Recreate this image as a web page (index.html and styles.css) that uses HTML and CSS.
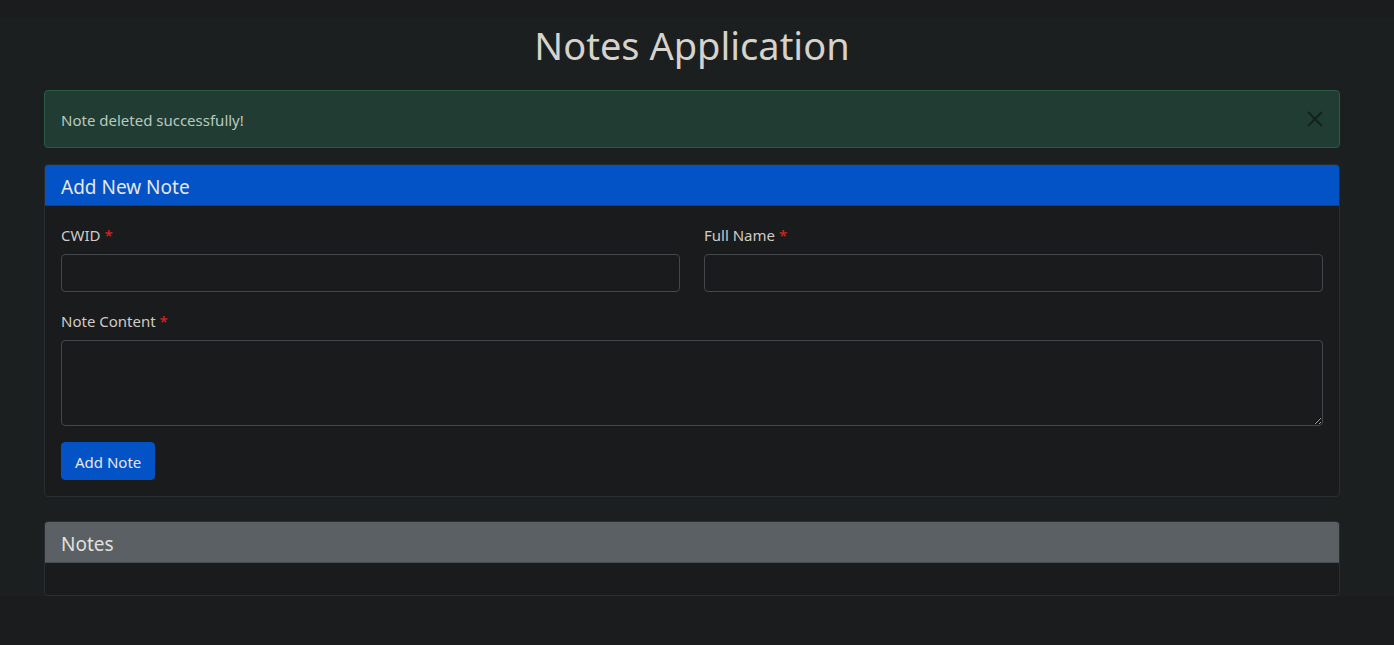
FILE: index.html
```html
<!DOCTYPE html>
<html lang="en">
<head>
<meta charset="utf-8">
<title>Notes Application</title>
<link rel="stylesheet" href="styles.css">
</head>
<body>
<div class="container">
  <h1 class="title">Notes Application</h1>
  <div class="alert">
    <span class="alert-text">Note deleted successfully!</span>
    <button class="close" aria-label="Close">
      <svg width="18" height="18" viewBox="0 0 18 18"><path d="M2 2 L16 16 M16 2 L2 16" stroke="currentColor" stroke-width="2" fill="none"/></svg>
    </button>
  </div>
  <div class="card">
    <div class="card-header primary">Add New Note</div>
    <div class="card-body">
      <div class="row">
        <div class="field">
          <label>CWID <span class="req">*</span></label>
          <input type="text" class="input">
        </div>
        <div class="field">
          <label>Full Name <span class="req">*</span></label>
          <input type="text" class="input">
        </div>
      </div>
      <div class="field">
        <label>Note Content <span class="req">*</span></label>
        <textarea class="input textarea" rows="3"></textarea>
      </div>
      <button class="btn">Add Note</button>
    </div>
  </div>
  <div class="card notes">
    <div class="card-header secondary">Notes</div>
    <div class="card-body empty"></div>
  </div>
</div>
</body>
</html>
```
FILE: styles.css
```css
html {
  background: #1b1c1e;
}
body {
  margin: 17px 0 0;
  padding: 4px 10px 0 0;
  background: #1c1f20;
  font-family: "Noto Sans", "Open Sans", sans-serif;
  font-size: 16px;
  line-height: 24px;
  color: #d3cfc9;
}
.container {
  width: 1296px;
  margin: 0 auto;
}
.title {
  margin: 0 0 21px;
  font-size: 38px;
  line-height: 48px;
  font-weight: 400;
  text-align: center;
  color: #d6d2cc;
}
.alert {
  display: flex;
  align-items: center;
  justify-content: space-between;
  height: 56px;
  padding: 0 15px 0 16px;
  background: #213d33;
  border: 1px solid #2c5a44;
  border-radius: 4px;
  color: #b9c9bf;
  margin-bottom: 16px;
}
.alert-text {
  font-size: 15px;
  padding-top: 2px;
}
.close {
  background: none;
  border: 0;
  padding: 0;
  display: flex;
  color: #13221b;
}
.card {
  background: #1a1b1d;
  border: 1px solid #2b2e30;
  border-radius: 4px;
  margin-bottom: 24px;
  overflow: hidden;
}
.card-header {
  padding: 10px 16px 6px;
  font-size: 19px;
  line-height: 24px;
  color: #e8e6e3;
  border-bottom: 1px solid rgba(0,0,0,0.2);
}
.card-header.primary {
  background: #0352c6;
}
.card-header.secondary {
  background: #5a6063;
  color: #e2e0dc;
}
.card-body {
  padding: 16px;
}
.card-body.empty {
  height: 0;
}
.row {
  display: grid;
  grid-template-columns: 1fr 1fr;
  column-gap: 24px;
}
.field {
  display: flex;
  flex-direction: column;
  margin-bottom: 16px;
}
label {
  font-size: 15px;
  padding-top: 1px;
  margin-bottom: 7px;
  color: #d0ccc5;
}
.req {
  color: #e3241f;
}
.input {
  height: 38px;
  box-sizing: border-box;
  background: #1a1b1d;
  border: 1px solid #43474a;
  border-radius: 4px;
  color: #d3cfc9;
  font: inherit;
  padding: 6px 12px;
}
.textarea {
  height: 86px;
  resize: vertical;
}
.btn {
  height: 38px;
  padding: 2px 13px 0;
  background: #0352c6;
  border: 1px solid #0352c6;
  border-radius: 4px;
  color: #e8e6e3;
  font: inherit;
  font-size: 15px;
}
.card.notes {
  margin-bottom: 0;
}
```
